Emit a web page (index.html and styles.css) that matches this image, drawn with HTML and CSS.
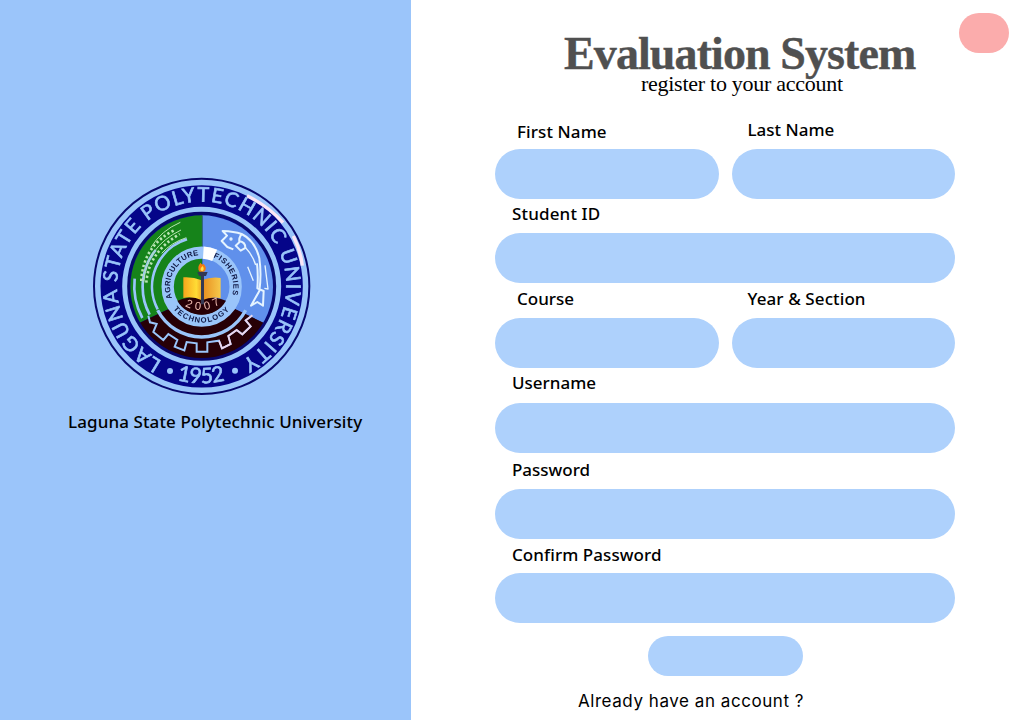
FILE: index.html
```html
<!DOCTYPE html>
<html lang="en">
<head>
<meta charset="utf-8">
<title>Evaluation System</title>
<link rel="stylesheet" href="styles.css">
</head>
<body>
<main class="page">
  <aside class="brand">
    <svg class="seal" viewBox="0 0 705 705" role="img" aria-label="University seal">
      <defs>
        <path id="ring-outer" d="M231 573A254 254 0 1 1 469 573"/>
        <path id="ring-year" d="M200 598A291 291 0 0 0 500 598"/>
        <path id="ring-inner" d="M262 386A95 95 0 1 1 438 386"/>
        <path id="ring-tech" d="M249 390A109 109 0 0 0 451 390"/>
        <path id="arc-year2" d="M295 406Q352 437 410 400"/>
        <clipPath id="disc"><circle cx="350" cy="350" r="214"/></clipPath>
        <linearGradient id="book" x1="0" x2="1"><stop offset="0" stop-color="#f7a51c"/><stop offset=".35" stop-color="#ffdc35"/><stop offset=".55" stop-color="#e99222"/><stop offset="1" stop-color="#f6c94b"/></linearGradient>
      </defs>
      <circle cx="350" cy="349" r="323" fill="#9ac5fa" stroke="#08086e" stroke-width="6"/>
      <circle cx="350" cy="349" r="271" fill="none" stroke="#050589" stroke-width="65"/>
      <g fill="none" stroke="#fbe5f5" stroke-width="10"><path d="M486 77Q552 110 594 158M625 198Q647 242 652 287"/></g>
      <circle cx="350" cy="349" r="219" fill="#050589" stroke="#08086e" stroke-width="9"/>
      <g clip-path="url(#disc)">
        <path d="M352 130V370L130 474V130z" fill="#16831a"/>
        <path d="M352 130V370L570 476V130z" fill="#6090eb"/>
        <path d="M351 370L110 484V570H590V484z" fill="#270006"/>
        <path d="M352 135V240" stroke="#31657a" stroke-width="3"/>
        <g fill="none" stroke="#9ac5fa" stroke-width="8">
          <path d="M306 208A148 148 0 0 0 218 418"/>
          <path d="M212 240A176 176 0 0 0 194 434"/>
          <path d="M149 326A204 204 0 0 0 172 444"/>
          <path d="M218 421A149 149 0 0 0 482 421" stroke-width="10"/>
          <path d="M190 437L195 457L215 462L205 486L235 510L250 492L277 510L269 530L298 541L305 516L335 520V545H367V517L402 512L411 535L437 522L430 498L455 480L472 493L497 469L482 451L502 436" stroke-width="6"/>
        </g>
        <path d="M402 512L411 535L437 522L430 498L455 480L472 493L497 469L482 451L502 436" fill="none" stroke="#eed5eb" stroke-width="5"/>
        <g fill="none" stroke="#b8e5b2">
          <path d="M176 338Q182 232 288 180" stroke-width="3"/>
          <path d="M169 333Q174 225 272 179M184 338Q190 248 284 192" stroke-width="8" stroke-dasharray="7 7"/>
          <path d="M198 232Q228 182 286 157M230 250Q258 218 304 203" stroke-width="3"/>
        </g>
        <g fill="none" stroke="#e5f4ff" stroke-width="6" stroke-linejoin="round">
          <path d="M445 238L427 231L410 213L426 197L413 183Q447 184 470 192Q510 212 523 265Q530 312 523 363L498 407L517 396L534 407L536 363L517 355Q520 316 516 280"/>
          <path d="M470 192Q461 203 463 217L452 227L467 242L484 232M462 213Q482 216 481 234"/>
          <path d="M483 235Q503 256 512 285" stroke-width="4"/>
          <path d="M488 290L505 332M540 286L549 357L538 355" stroke-width="4"/>
          <circle cx="438" cy="207" r="2"/>
        </g>
      </g>
      <circle cx="350" cy="350" r="102" fill="none" stroke="#9ac5fa" stroke-width="37"/>
      <path d="M355 248A102 102 0 0 1 389 256" fill="none" stroke="#fff" stroke-width="37"/>
      <path d="M277 392Q305 380 350 380Q395 380 423 392A84 84 0 0 1 277 392z" fill="#270006"/>
      <path d="M295 322Q324 320 350 331Q380 319 407 324V385Q380 378 351 391Q323 378 295 384z" fill="url(#book)"/>
      <path d="M337 306H368L363 318H357V403H348V318H342z" fill="#333854"/>
      <path d="M344 305Q334 292 347 278Q350 286 356 282Q369 296 357 305z" fill="#f47a10"/>
      <path d="M348 302Q344 295 353 288Q359 297 353 303z" fill="#ffe04b"/>
      <text class="seal-name"><textPath href="#ring-outer" textLength="1346" lengthAdjust="spacing">LAGUNA STATE POLYTECHNIC UNIVERSITY</textPath></text>
      <text class="seal-year"><textPath href="#ring-year" startOffset="83" textLength="146">1952</textPath></text>
      <circle cx="255" cy="603" r="9" fill="#9ac5fa"/><circle cx="450" cy="602" r="9" fill="#9ac5fa"/>
      <text class="seal-field"><textPath href="#ring-inner" startOffset="2" textLength="174">AGRICULTURE</textPath></text>
      <text class="seal-field"><textPath href="#ring-inner" startOffset="221" textLength="138">FISHERIES</textPath></text>
      <text class="seal-field"><textPath href="#ring-tech" startOffset="31" textLength="192">TECHNOLOGY</textPath></text>
      <text class="seal-founded"><textPath href="#arc-year2" startOffset="5" textLength="112">2007</textPath></text>
    </svg>
    <p class="brand-name">Laguna State Polytechnic University</p>
  </aside>
  <section class="panel">
    <span class="corner-button"></span>
    <header class="heading">
      <h1 class="title">Evaluation System</h1>
      <p class="subtitle">register to your account</p>
    </header>
    <form class="form">
      <div class="row">
        <div class="field"><label class="label first" for="first">First Name</label><input class="control" id="first"></div>
        <div class="field"><label class="label last" for="last">Last Name</label><input class="control" id="last"></div>
      </div>
      <div class="field"><label class="label student" for="student">Student ID</label><input class="control" id="student"></div>
      <div class="row">
        <div class="field"><label class="label course" for="course">Course</label><input class="control" id="course"></div>
        <div class="field"><label class="label year" for="year">Year &amp; Section</label><input class="control" id="year"></div>
      </div>
      <div class="field"><label class="label username" for="username">Username</label><input class="control" id="username"></div>
      <div class="field"><label class="label password" for="password">Password</label><input class="control" id="password" type="password"></div>
      <div class="field"><label class="label confirm" for="confirm">Confirm Password</label><input class="control" id="confirm" type="password"></div>
      <button class="submit" type="button" aria-label="Register"></button>
    </form>
    <p class="login">Already have an account ?</p>
  </section>
</main>
</body>
</html>
```
FILE: styles.css
```css
* { box-sizing: border-box; }
body { margin: 0; background: #fff; color: #000; font-family: "Noto Sans", sans-serif; }
h1, p { margin: 0; }
.page { display: flex; width: 1024px; height: 720px; overflow: hidden; }
.brand { width: 411px; padding: 170px 0 0 68px; background: #9bc5fa; }
.seal { display: block; width: 235px; height: 235px; margin-left: 17px; filter: blur(.25px); }
.seal text { font-family: "Lato", sans-serif; }
.seal .seal-name { font-size: 60px; fill: #9ac5fa; stroke: #9ac5fa; stroke-width: 2px; }
.seal .seal-year { font-size: 64px; fill: #9ac5fa; stroke: #9ac5fa; stroke-width: 2px; }
.seal .seal-field { font-family: "Liberation Sans", sans-serif; font-size: 23px; font-weight: 700; fill: #101845; }
.seal .seal-founded { font-family: "Liberation Sans", sans-serif; font-size: 34px; fill: #f2bdb4; }
.brand-name { margin-top: 5px; font-size: 17px; line-height: 24px; font-weight: 500; letter-spacing: .1px; white-space: nowrap; }
.panel { position: relative; flex: 1; padding: 29px 0 0 84px; }
.corner-button { position: absolute; top: 13px; right: 15px; width: 50px; height: 40px; border-radius: 20px; background: #fbacac; }
.heading { width: 460px; height: 85px; white-space: nowrap; }
.title { padding-left: 69px; color: #505050; font: 700 46px/50px "Liberation Serif", serif; letter-spacing: -.9px; -webkit-text-stroke: .4px #505050; }
.subtitle { margin-top: -8px; padding-left: 146px; font: 22px/26px "Liberation Serif", serif; letter-spacing: -.27px; }
.form { width: 460px; }
.row { display: grid; grid-template-columns: 223.5px 223.5px; column-gap: 13px; }
.label { display: flex; align-items: flex-end; height: 34.7px; padding: 0 0 7px 17px; font-size: 17px; line-height: 24px; font-weight: 500; white-space: nowrap; }
.first { padding-left: 22px; padding-bottom: 5px; letter-spacing: .1px; }
.last { padding-left: 16px; }
.student { letter-spacing: .15px; }
.course { padding-left: 22px; }
.year { padding-left: 16px; letter-spacing: .1px; }
.username { padding-bottom: 8px; }
.password { height: 36.5px; }
.confirm { height: 34px; padding-bottom: 6px; letter-spacing: .08px; }
.control { display: block; width: 100%; height: 50px; border: 0; padding: 0 24px; border-radius: 25px; background: #aed1fc; font: inherit; }
.submit { display: block; width: 154.5px; height: 40.5px; margin: 12.5px 0 0 153px; border: 0; border-radius: 20.25px; background: #aed1fc; }
.login { margin-top: 13px; padding-left: 83px; font: 17px/24px Inter, sans-serif; letter-spacing: .55px; }
```
